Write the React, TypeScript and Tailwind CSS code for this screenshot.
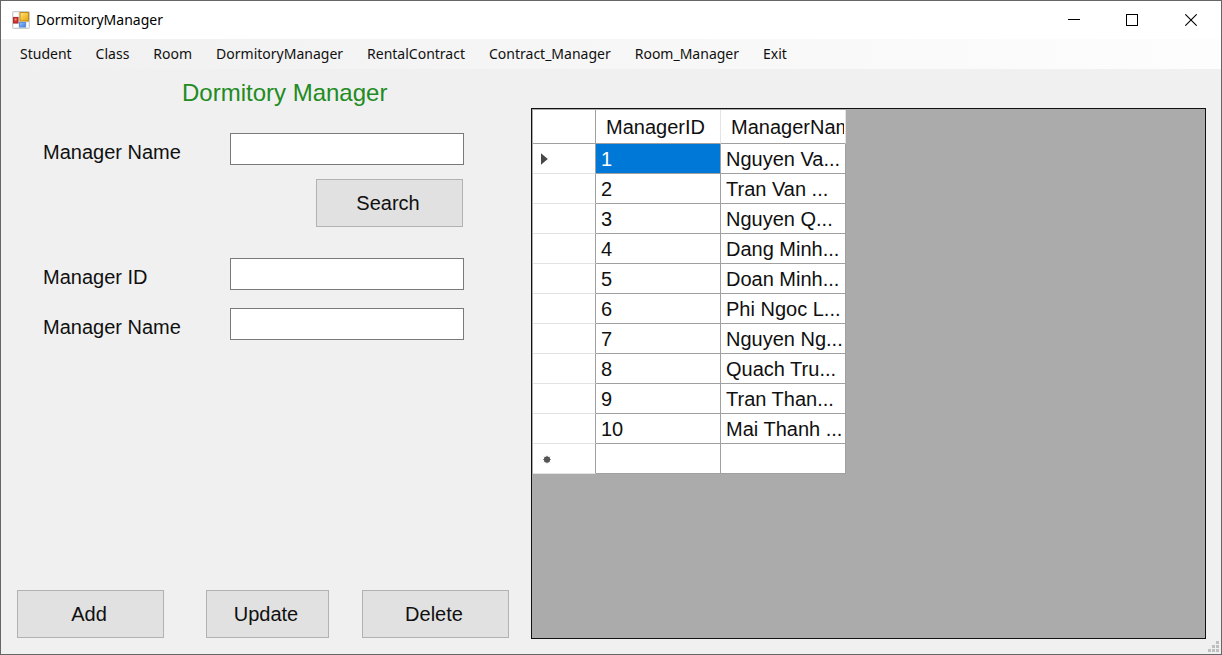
import React from "react";

const menuItems = [
  "Student",
  "Class",
  "Room",
  "DormitoryManager",
  "RentalContract",
  "Contract_Manager",
  "Room_Manager",
  "Exit",
];

const managers = [
  "Nguyen Va...",
  "Tran Van ...",
  "Nguyen Q...",
  "Dang Minh...",
  "Doan Minh...",
  "Phi Ngoc L...",
  "Nguyen Ng...",
  "Quach Tru...",
  "Tran Than...",
  "Mai Thanh ...",
];

const buttonBase =
  "h-12 border border-[#b2b2b2] bg-[#e1e1e1] pr-[3px] text-center text-xl text-[#101010]";
const inputBase =
  "block h-8 w-full border border-[#7a7a7a] bg-white px-1 text-xl outline-none";
const rowHeader =
  "h-[30px] border-r border-b border-r-[#a0a0a0] border-b-[#e3e3e3] bg-white p-0 pl-2";
const cell =
  "h-[30px] overflow-hidden border-r border-b border-[#a0a0a0] p-0 pl-[5px] text-left whitespace-nowrap";
const columnHeader =
  "h-[34px] border-r border-b border-r-[#e3e3e3] border-b-[#a0a0a0] p-0 pr-px pl-[10px] text-left font-normal whitespace-nowrap";

function AppIcon() {
  return (
    <svg width="18" height="18" viewBox="0 0 18 18" aria-hidden="true">
      <defs>
        <linearGradient id="gold" x1="0" y1="0" x2="1" y2="1">
          <stop offset="0" stopColor="#ffe680" />
          <stop offset="1" stopColor="#e8a300" />
        </linearGradient>
        <linearGradient id="sky" x1="0" y1="0" x2="1" y2="1">
          <stop offset="0" stopColor="#9cc4f8" />
          <stop offset="1" stopColor="#3b78dc" />
        </linearGradient>
      </defs>
      <rect x="0.5" y="0.5" width="17" height="17" rx="1" fill="#dedede" stroke="#cdcdcd" />
      <path d="M1.5 1.5h5v4h-5zM1.5 13h5v3.5h-5z" fill="#fff" />
      <rect x="8" y="1.5" width="8.5" height="8.5" fill="url(#gold)" stroke="#c08a18" />
      <rect x="1.5" y="6.5" width="4.5" height="5.5" fill="#d4322c" stroke="#b02a2a" />
      <rect x="2.5" y="7.5" width="2" height="2" fill="#ee8d84" />
      <rect x="7.5" y="11.5" width="6" height="4.5" fill="url(#sky)" stroke="#5c92e0" />
      <path d="M14.5 11.5h2v5h-2z" fill="#fff" />
    </svg>
  );
}

function Field({ id, label }: { id: string; label: string }) {
  return (
    <div className="flex h-[33px] items-end">
      <label htmlFor={id} className="w-[187px] shrink-0 text-xl leading-7">
        {label}
      </label>
      <div className="w-[234px] self-start">
        <input id={id} type="text" className={inputBase} />
      </div>
    </div>
  );
}

export default function App() {
  return (
    <div className="relative flex min-h-screen flex-col border border-[#666668] bg-[#f0f0f0] font-['Liberation_Sans',Arial,sans-serif] text-[#101010]">
      <header className="flex h-[38px] items-center bg-white pl-[11px] font-['Noto_Sans','Open_Sans',sans-serif]">
        <AppIcon />
        <span className="ml-[6px] text-[14px] leading-5 text-black">DormitoryManager</span>
        <div className="ml-auto flex h-full">
          <button type="button" aria-label="Minimize" className="flex w-[58px] items-center justify-center">
            <svg width="12" height="12" viewBox="0 0 12 12" shapeRendering="crispEdges">
              <path d="M0 5.5h12" stroke="#000" />
            </svg>
          </button>
          <button type="button" aria-label="Maximize" className="flex w-[58px] items-center justify-center">
            <svg width="12" height="12" viewBox="0 0 12 12" shapeRendering="crispEdges">
              <rect x="0.5" y="0.5" width="11" height="11" fill="none" stroke="#000" />
            </svg>
          </button>
          <button type="button" aria-label="Close" className="flex w-[60px] items-center justify-center">
            <svg width="12" height="12" viewBox="0 0 12 12">
              <path d="M0.3 0.3l11.4 11.4M11.7 0.3L0.3 11.7" stroke="#000" strokeWidth="1.1" />
            </svg>
          </button>
        </div>
      </header>

      <nav className="flex h-[30px] items-center gap-6 bg-linear-to-r from-[#f0f0f0] to-[#fdfdfd] pl-[19px] font-['Noto_Sans','Open_Sans',sans-serif] text-[14px]">
        {menuItems.map((item) => (
          <button key={item} type="button" className="leading-5">
            {item}
          </button>
        ))}
      </nav>

      <main className="flex flex-1">
        <section className="flex w-[530px] shrink-0 flex-col pb-4 pl-4">
          <h1 className="mt-2 pl-[165px] text-[24px] leading-8 text-[#228b22]">Dormitory Manager</h1>
          <form className="mt-6 flex flex-1 flex-col pl-[26px]" onSubmit={(e) => e.preventDefault()}>
            <Field id="search-name" label="Manager Name" />
            <div className="mt-[13px] flex w-[420px] justify-end">
              <button type="submit" className={`${buttonBase} w-[147px]`}>
                Search
              </button>
            </div>
            <div className="mt-[31px] flex flex-col gap-[17px]">
              <Field id="manager-id" label="Manager ID" />
              <Field id="manager-name" label="Manager Name" />
            </div>
          </form>
          <div className="flex">
            <button type="button" className={`${buttonBase} w-[147px]`}>
              Add
            </button>
            <button type="button" className={`${buttonBase} ml-[42px] w-[123px]`}>
              Update
            </button>
            <button type="button" className={`${buttonBase} ml-[33px] w-[147px]`}>
              Delete
            </button>
          </div>
        </section>

        <section className="mt-[39px] mr-[15px] mb-[15px] flex-1 border border-[#111111] bg-[#ababab] p-px">
          <table className="w-[313px] table-fixed border-separate border-spacing-0 bg-white text-xl leading-7">
            <colgroup>
              <col className="w-[63px]" />
              <col className="w-[125px]" />
              <col className="w-[125px]" />
            </colgroup>
            <thead>
              <tr>
                <td className="h-[34px] border-r border-b border-r-[#a0a0a0] border-b-[#a0a0a0] p-0" />
                <th className={columnHeader}>
                  <div className="overflow-hidden">ManagerID</div>
                </th>
                <th className={columnHeader}>
                  <div className="overflow-hidden">ManagerName</div>
                </th>
              </tr>
            </thead>
            <tbody>
              {managers.map((name, i) => (
                <tr key={i}>
                  <td className={rowHeader}>
                    {i === 0 && (
                      <svg width="7" height="12" viewBox="0 0 7 12" aria-label="Current row">
                        <path d="M0 0.3L6.8 6L0 11.7z" fill="#484848" />
                      </svg>
                    )}
                  </td>
                  <td className={i === 0 ? `${cell} bg-[#0078d7] text-white` : cell}>{i + 1}</td>
                  <td className={cell}>{name}</td>
                </tr>
              ))}
              <tr>
                <td className={rowHeader}>
                  <svg width="12" height="10" viewBox="0 0 12 10" aria-label="New row">
                    <circle cx="6" cy="5.5" r="3.1" fill="#555" />
                    <path
                      d="M6 1.8v7.4M2.3 5.5h7.4M3.3 2.8l5.4 5.4M8.7 2.8L3.3 8.2"
                      stroke="#555"
                      strokeWidth="1"
                    />
                  </svg>
                </td>
                <td className={cell} />
                <td className={cell} />
              </tr>
            </tbody>
          </table>
        </section>
      </main>

      <svg
        className="absolute right-px bottom-px"
        width="12"
        height="12"
        viewBox="0 0 12 12"
        aria-hidden="true"
      >
        <path
          d="M8 0h3v3H8zM4 4h3v3H4zM8 4h3v3H8zM0 8h3v3H0zM4 8h3v3H4zM8 8h3v3H8z"
          fill="#bfbfbf"
        />
      </svg>
    </div>
  );
}
